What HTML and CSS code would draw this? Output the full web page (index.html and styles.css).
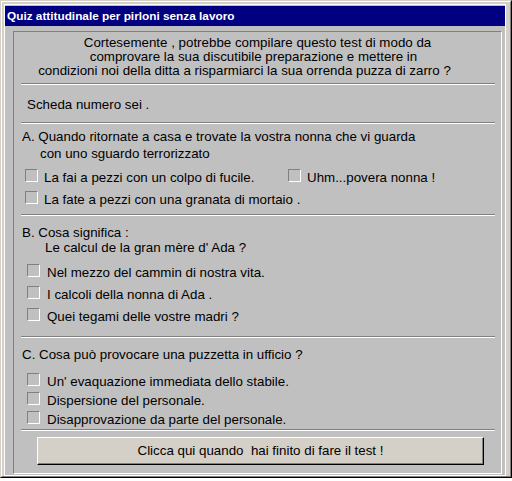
FILE: index.html
```html
<!DOCTYPE html>
<html>
<head>
<meta charset="utf-8">
<title>Quiz attitudinale</title>
<link rel="stylesheet" href="styles.css">
</head>
<body>
<div class="window">
  <div class="frame">
    <div class="inner">
      <div class="titlebar">Quiz attitudinale per pirloni senza lavoro</div>
      <div class="body">
        <div class="panel">
          <div class="intro">
            <div class="iline">Cortesemente , potrebbe compilare questo test di modo da</div>
            <div class="iline i2">comprovare la sua discutibile preparazione e mettere in</div>
            <div class="iline i3">condizioni noi della ditta a risparmiarci la sua orrenda puzza di zarro ?</div>
          </div>
          <div class="sep s1"></div>
          <div class="scheda">Scheda numero sei .</div>
          <div class="sep s2"></div>

          <div class="question qa">
            <div>A. Quando ritornate a casa e trovate la vostra nonna che vi guarda</div>
            <div class="indent-a">con uno sguardo terrorizzato</div>
          </div>
          <div class="opts opts-a">
            <div class="opt"><span class="cb"></span>La fai a pezzi con un colpo di fucile.</div>
            <div class="opt"><span class="cb"></span>Uhm...povera nonna !</div>
            <div class="opt"><span class="cb"></span>La fate a pezzi con una granata di mortaio .</div>
          </div>
          <div class="sep s3"></div>

          <div class="question qb">
            <div>B. Cosa significa :</div>
            <div class="indent-b">Le calcul de la gran mère d' Ada ?</div>
          </div>
          <div class="opts opts-b">
            <div class="opt"><span class="cb"></span>Nel mezzo del cammin di nostra vita.</div>
            <div class="opt"><span class="cb"></span>I calcoli della nonna di Ada .</div>
            <div class="opt"><span class="cb"></span>Quei tegami delle vostre madri ?</div>
          </div>
          <div class="sep s4"></div>

          <div class="question qc">
            <div>C. Cosa può provocare una puzzetta in ufficio ?</div>
          </div>
          <div class="opts opts-c">
            <div class="opt"><span class="cb"></span>Un' evaquazione immediata dello stabile.</div>
            <div class="opt"><span class="cb"></span>Dispersione del personale.</div>
            <div class="opt"><span class="cb"></span>Disapprovazione da parte del personale.</div>
          </div>
          <div class="sep s5"></div>

          <div class="btnrow">
            <div class="button">Clicca qui quando&nbsp; hai finito di fare il test !</div>
          </div>
        </div>
      </div>
    </div>
  </div>
</div>
</body>
</html>
```
FILE: styles.css
```css
html, body {
  margin: 0;
  padding: 0;
  background: #ffffff;
}

body {
  font-family: "Liberation Sans", Arial, sans-serif;
  font-size: 13.33px;
  color: #000000;
}

.window {
  width: 512px;
  height: 478px;
  box-sizing: border-box;
  display: flex;
  border: 1px solid;
  border-color: #d4d0c8 #000000 #000000 #d4d0c8;
}

.frame {
  flex: 1;
  display: flex;
  border: 1px solid;
  border-color: #ffffff #808080 #808080 #ffffff;
  background: #d4d0c8;
  padding: 2px 4px 0 2px;
}

.inner {
  flex: 1;
  display: flex;
  flex-direction: column;
  border: 1px solid #ffffff;
  background: #c0c0c0;
  padding-top: 1px;
}

.titlebar {
  height: 20px;
  line-height: 20px;
  background: #000080;
  color: #ffffff;
  font-weight: bold;
  font-size: 11.8px;
  padding-left: 2px;
  white-space: nowrap;
}

.body {
  flex: 1;
  display: flex;
  padding: 5px 3px 1px 8px;
}

.panel {
  flex: 1;
  border: 1px solid;
  border-color: #808080 #ffffff #ffffff #808080;
}

.intro {
  margin-top: 4px;
  text-align: center;
  line-height: 14px;
  white-space: nowrap;
}

.i2 { padding-right: 8px; }
.i3 { padding-right: 26px; }

.sep {
  height: 0;
  border-top: 1px solid #808080;
  border-bottom: 1px solid #ffffff;
  margin-left: 7px;
  margin-right: 6px;
}

.s1 { margin-top: 5px; }
.s2 { margin-top: 10px; }
.s3 { margin-top: 3px; }
.s4 { margin-top: 8px; }
.s5 { margin-top: 0; }

.scheda {
  margin-top: 12px;
  margin-left: 13px;
  line-height: 15px;
}

.question {
  margin-left: 8px;
  white-space: nowrap;
}

.qa {
  margin-top: 4px;
  line-height: 17px;
}

.qb {
  margin-top: 9px;
  line-height: 15px;
}

.qc {
  margin-top: 9px;
  line-height: 15px;
}

.indent-a { padding-left: 18px; }
.indent-b { padding-left: 23px; }

.opts { white-space: nowrap; }

.opts-a {
  display: grid;
  grid-template-columns: 263px auto;
  margin-top: 5px;
  margin-left: 11px;
  line-height: 22px;
}

.opts-b {
  margin-top: 7px;
  margin-left: 13px;
  line-height: 22px;
}

.opts-c {
  margin-top: 10px;
  margin-left: 13px;
  line-height: 19px;
}

.cb {
  display: inline-block;
  width: 11px;
  height: 11px;
  border: 1px solid;
  border-color: #808080 #ffffff #ffffff #808080;
  vertical-align: baseline;
  margin-right: 6px;
}

.opts-b .cb, .opts-c .cb { margin-right: 7px; }

.btnrow {
  margin-top: 6px;
  padding-left: 23px;
  padding-right: 17px;
}

.button {
  height: 28px;
  box-sizing: border-box;
  border: 1px solid;
  border-color: #ffffff #000000 #000000 #ffffff;
  box-shadow: inset -1px -1px 0 #808080;
  background: #d4d0c8;
  text-align: center;
  line-height: 25px;
  white-space: nowrap;
}
```
